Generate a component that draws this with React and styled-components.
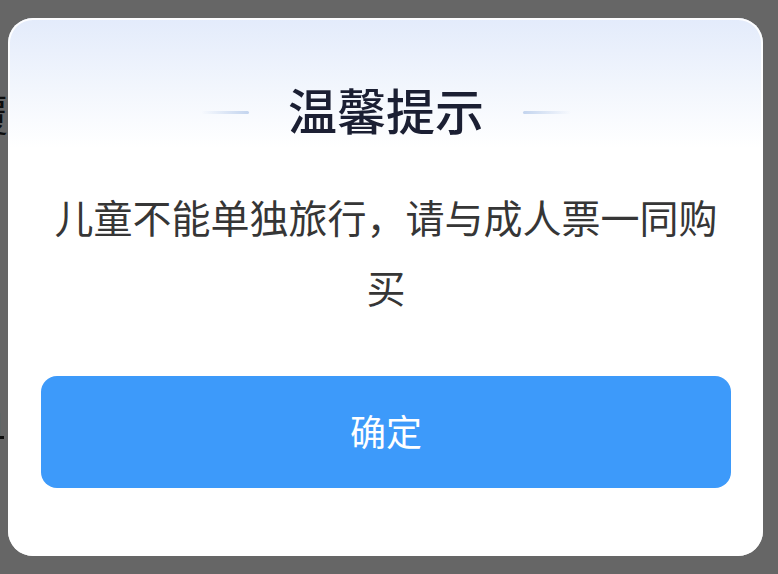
import React from "react";
import styled, { createGlobalStyle } from "styled-components";

const Global = createGlobalStyle`
  html, body { margin: 0; padding: 0; }
  body {
    width: 778px;
    height: 574px;
    overflow: hidden;
    background: #ffffff;
    font-family: "Noto Sans CJK SC", "Noto Sans", sans-serif;
  }
`;

const Page = styled.div`
  width: 778px;
  height: 574px;
  background: #ffffff;
  display: flex;
  flex-direction: column;
  padding-top: 88px;
  box-sizing: border-box;
  color: #222;
`;

const PageLine = styled.div`
  margin-left: ${(p) => p.$shift}px;
  margin-top: ${(p) => p.$top}px;
  font-size: ${(p) => p.$size}px;
  line-height: 1.2;
  text-decoration: ${(p) => (p.$underline ? "underline" : "none")};
  white-space: nowrap;
`;

const Overlay = styled.div`
  position: fixed;
  inset: 0;
  background: rgba(0, 0, 0, 0.6);
  display: flex;
  align-items: flex-start;
  padding: 18px 0 0 8px;
  box-sizing: border-box;
`;

const Modal = styled.div`
  width: 755px;
  height: 538px;
  box-sizing: border-box;
  border-radius: 25px;
  background: linear-gradient(180deg, #e3ebfb 0px, #f2f6fd 70px, #ffffff 130px);
  box-shadow: inset 0 0 0 2px rgba(255, 255, 255, 0.9);
  display: flex;
  flex-direction: column;
  padding: 59px 32px 68px 33px;
`;

const TitleRow = styled.div`
  display: flex;
  align-items: center;
  justify-content: center;
  gap: 39px;
  height: 64px;
`;

const Deco = styled.span`
  width: 48px;
  height: 3px;
  border-radius: 2px;
  margin-top: 6px;
  background: linear-gradient(
    ${(p) => (p.$side === "left" ? "90deg" : "270deg")},
    rgba(190, 208, 235, 0) 0%,
    #c3d4ee 100%
  );
`;

const Title = styled.h1`
  margin: 0;
  font-size: 49px;
  line-height: 64px;
  font-weight: 500;
  color: #1b1f33;
  letter-spacing: 0;
`;

const Message = styled.p`
  margin: 40px 0 0;
  font-size: 39px;
  line-height: 70px;
  color: #363636;
  text-align: center;
  font-weight: 400;
`;

const ConfirmButton = styled.button`
  margin-top: 55px;
  height: 112px;
  width: 100%;
  padding: 0 0 5px;
  border: none;
  border-radius: 16px;
  background: #3d9afa;
  color: #ffffff;
  font-family: "Noto Sans CJK SC", "Noto Sans", sans-serif;
  font-size: 36px;
  font-weight: 400;
  cursor: pointer;
`;

export default function App() {
  return (
    <>
      <Global />
      <Page>
        <PageLine $shift={-34} $top={0} $size={42}>
          覆
        </PageLine>
        <PageLine $shift={-30} $top={14} $size={24}>
          ：
        </PageLine>
        <PageLine $shift={-26} $top={222} $size={30} $underline>
          自
        </PageLine>
      </Page>
      <Overlay>
        <Modal role="dialog" aria-labelledby="tip-title">
          <TitleRow>
            <Deco $side="left" />
            <Title id="tip-title">温馨提示</Title>
            <Deco $side="right" />
          </TitleRow>
          <Message>儿童不能单独旅行，请与成人票一同购买</Message>
          <ConfirmButton type="button">确定</ConfirmButton>
        </Modal>
      </Overlay>
    </>
  );
}
